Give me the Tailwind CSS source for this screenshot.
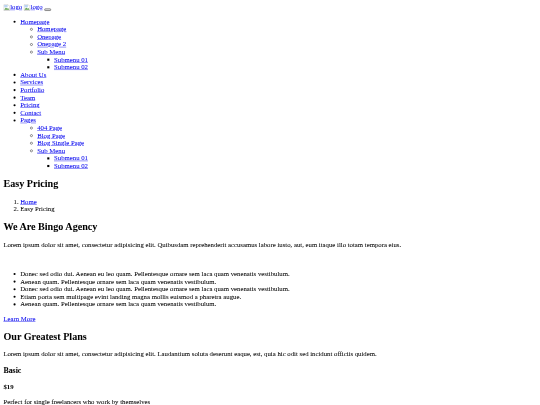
<!DOCTYPE html>
<html lang="en">
<head>
  <meta charset="UTF-8" />
  <title>Easy Pricing</title>
  <script src="https://cdn.jsdelivr.net/npm/@tailwindcss/browser@4"></script>
</head>
<body class="bg-white">
  <!-- page is a 1280 wide layout shrunk down to the 540 window -->
  <div class="w-[540px] h-[405px] overflow-hidden">
    <div class="w-[1280px] h-[960px] overflow-hidden origin-top-left scale-[0.421875] blur-[0.6px] p-2 text-[16px] leading-[18px] text-black [-webkit-text-stroke:0.1px] font-['Liberation_Serif',serif]">
      <header>
        <div class="flex items-end h-[18px]">
          <a href="#" class="inline-flex items-end text-[#0000ee] underline">
            <svg class="w-4 h-4 shrink-0" viewBox="0 0 16 16"><path d="M1 1h10l4 4v10H1z" fill="#fff" stroke="#a0a0a0"/><path d="M2 13l4-5 3 3 2-2 3 4z" fill="#5fa04e"/><path d="M2 2h8v5H2z" fill="#b9d3f2"/></svg>logo</a>
          <a href="#" class="ml-1 inline-flex items-end text-[#0000ee] underline">
            <svg class="w-4 h-4 shrink-0" viewBox="0 0 16 16"><path d="M1 1h10l4 4v10H1z" fill="#fff" stroke="#a0a0a0"/><path d="M2 13l4-5 3 3 2-2 3 4z" fill="#5fa04e"/><path d="M2 2h8v5H2z" fill="#b9d3f2"/></svg>logo</a>
          <button class="ml-1 w-4 h-[6px] border-2 border-[#767676] bg-[#efefef] rounded-[2px]"></button>
        </div>
        <ul class="list-disc pl-10 my-4 [&_a]:text-[#0000ee] [&_a]:underline">
          <li><a href="#">Homepage</a>
            <ul class="list-[circle] pl-10">
              <li><a href="#">Homepage</a></li>
              <li><a href="#">Onepage</a></li>
              <li><a href="#">Onepage 2</a></li>
              <li><a href="#">Sub Menu</a>
                <ul class="list-[square] pl-10">
                  <li><a href="#">Submenu 01</a></li>
                  <li><a href="#">Submenu 02</a></li>
                </ul>
              </li>
            </ul>
          </li>
          <li><a href="#">About Us</a></li>
          <li><a href="#">Services</a></li>
          <li><a href="#">Portfolio</a></li>
          <li><a href="#">Team</a></li>
          <li><a href="#">Pricing</a></li>
          <li><a href="#">Contact</a></li>
          <li><a href="#">Pages</a>
            <ul class="list-[circle] pl-10">
              <li><a href="#">404 Page</a></li>
              <li><a href="#">Blog Page</a></li>
              <li><a href="#">Blog Single Page</a></li>
              <li><a href="#">Sub Menu</a>
                <ul class="list-[square] pl-10">
                  <li><a href="#">Submenu 01</a></li>
                  <li><a href="#">Submenu 02</a></li>
                </ul>
              </li>
            </ul>
          </li>
        </ul>
      </header>

      <h2 class="text-[24px] leading-[27px] font-bold my-5">Easy Pricing</h2>
      <ol class="list-decimal pl-10 my-4">
        <li><a href="#" class="text-[#0000ee] underline">Home</a></li>
        <li>Easy Pricing</li>
      </ol>

      <h2 class="text-[24px] leading-[27px] font-bold my-5">We Are Bingo Agency</h2>
      <p class="my-4">Lorem ipsum dolor sit amet, consectetur adipisicing elit. Quibusdam reprehenderit accusamus labore iusto, aut, eum itaque illo totam tempora eius.</p>
      <div class="h-[18px]"></div>
      <ul class="list-disc pl-10 my-4">
        <li>Donec sed odio dui. Aenean eu leo quam. Pellentesque ornare sem laca quam venenatis vestibulum.</li>
        <li>Aenean quam. Pellentesque ornare sem laca quam venenatis vestibulum.</li>
        <li>Donec sed odio dui. Aenean eu leo quam. Pellentesque ornare sem laca quam venenatis vestibulum.</li>
        <li>Etiam porta sem multipage evint landing magna mollis euismod a pharetra augue.</li>
        <li>Aenean quam. Pellentesque ornare sem laca quam venenatis vestibulum.</li>
      </ul>
      <a href="#" class="text-[#0000ee] underline">Learn More</a>

      <h2 class="text-[24px] leading-[27px] font-bold my-5">Our Greatest Plans</h2>
      <p class="my-4">Lorem ipsum dolor sit amet, consectetur adipisicing elit. Laudantium soluta deserunt eaque, est, quia hic odit sed incidunt officiis quidem.</p>
      <h3 class="text-[18.72px] leading-[21px] font-bold my-[18.72px]">Basic</h3>
      <h4 class="font-bold my-[18px]">$19</h4>
      <p class="my-4">Perfect for single freelancers who work by themselves</p>
    </div>
  </div>
</body>
</html>
